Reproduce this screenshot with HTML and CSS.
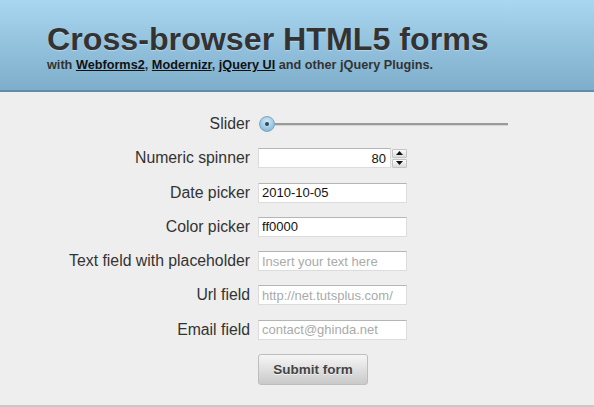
FILE: index.html
```html
<!DOCTYPE html>
<html>
<head>
<meta charset="utf-8">
<title>Cross-browser HTML5 forms</title>
<link rel="stylesheet" href="styles.css">
</head>
<body>
<div class="page">
  <header class="header">
    <h1 class="title">Cross-browser HTML5 forms</h1>
    <p class="subtitle">with <a href="#">Webforms2</a>, <a href="#">Modernizr</a>, <a href="#">jQuery UI</a> and other jQuery Plugins.</p>
  </header>
  <form class="form">
    <label class="label">Slider</label>
    <div class="field">
      <div class="slider"><span class="knob"><span class="dot"></span></span><span class="track"></span></div>
    </div>

    <label class="label">Numeric spinner</label>
    <div class="field spin">
      <input class="input num" type="text" value="80">
      <span class="spinbtns">
        <span class="sb up"><svg width="9" height="6" viewBox="0 0 9 6"><path d="M1 5 L4.5 1 L8 5 Z" fill="#111"/></svg></span>
        <span class="sb down"><svg width="9" height="6" viewBox="0 0 9 6"><path d="M1 1 L4.5 5 L8 1 Z" fill="#111"/></svg></span>
      </span>
    </div>

    <label class="label">Date picker</label>
    <div class="field"><input class="input" type="text" value="2010-10-05"></div>

    <label class="label">Color picker</label>
    <div class="field"><input class="input" type="text" value="ff0000"></div>

    <label class="label">Text field with placeholder</label>
    <div class="field"><input class="input" type="text" placeholder="Insert your text here"></div>

    <label class="label">Url field</label>
    <div class="field"><input class="input" type="text" placeholder="http://net.tutsplus.com/"></div>

    <label class="label">Email field</label>
    <div class="field"><input class="input" type="text" placeholder="contact@ghinda.net"></div>

    <span class="label"></span>
    <div class="field"><button class="submit" type="button">Submit form</button></div>
  </form>
</div>
</body>
</html>
```
FILE: styles.css
```css
html, body {
  margin: 0;
  padding: 0;
  background: #eeeeee;
}
body {
  font-family: "Liberation Sans", Arial, sans-serif;
  color: #333;
}
.page {
  height: 407px;
  box-sizing: border-box;
  border-bottom: 2px solid #c8c8c8;
  overflow: hidden;
}
.header {
  background: linear-gradient(#a9d6f0, #7eaecb);
  border-bottom: 2px solid #5f8eab;
  padding: 19px 0 0 47px;
  box-sizing: content-box;
  height: 71px;
}
.title {
  margin: 0;
  font-size: 32.2px;
  line-height: 40px;
  font-weight: bold;
  color: #333;
  text-shadow: 0 1px 1px rgba(255,255,255,0.35);
}
.subtitle {
  margin: -2px 0 0 0;
  font-size: 12.7px;
  line-height: 16px;
  font-weight: bold;
  color: #333;
}
.subtitle a {
  color: #111;
  text-decoration: underline;
}
.form {
  display: grid;
  grid-template-columns: 250px 1fr;
  column-gap: 8px;
  row-gap: 14.3px;
  padding-top: 22px;
  align-items: center;
}
.label {
  text-align: right;
  font-size: 15.8px;
  color: #333;
  line-height: 20px;
}
.field {
  display: flex;
  align-items: center;
  height: 20px;
}
.input {
  box-sizing: border-box;
  width: 149px;
  height: 20px;
  margin: 0;
  padding: 0 3px;
  border: 1px solid #dcdcdc;
  border-top-color: #b5b5b5;
  background: #fff;
  font-family: "Liberation Sans", Arial, sans-serif;
  font-size: 13px;
  color: #111;
  outline: none;
}
.input::placeholder {
  color: #aaa;
}
.num {
  width: 133px;
  text-align: right;
  padding-right: 4px;
}
.spinbtns {
  display: flex;
  flex-direction: column;
  margin-left: 1px;
  gap: 1px;
}
.sb {
  width: 13px;
  display: flex;
  align-items: center;
  justify-content: center;
  background: linear-gradient(#fbfbfb, #dcdcdc);
  border: 1px solid #c4c4c4;
  box-sizing: content-box;
  height: 7px;
  border-radius: 1px;
}
.slider {
  position: relative;
  width: 250px;
  height: 20px;
  display: flex;
  align-items: center;
}
.track {
  display: block;
  margin-left: 10px;
  width: 240px;
  height: 2px;
  background: #9a9a9a;
  border-bottom: 1px solid #d4d4d4;
}
.knob {
  position: absolute;
  left: 1px;
  top: 2px;
  width: 16px;
  height: 16px;
  border-radius: 50%;
  background: radial-gradient(circle at 50% 35%, #d6ebf7, #8fbfdc 70%, #6e9fbe);
  border: 1px solid #7da7c2;
  box-sizing: border-box;
  display: flex;
  align-items: center;
  justify-content: center;
  z-index: 1;
}
.dot {
  width: 4px;
  height: 4px;
  border-radius: 50%;
  background: #2c4a5e;
}
.submit {
  margin-top: 10px;
  width: 110px;
  height: 31px;
  border: 1px solid #bdbdbd;
  border-radius: 3px;
  background: linear-gradient(#f6f6f6, #c9c9c9);
  font-family: "Liberation Sans", Arial, sans-serif;
  font-weight: bold;
  font-size: 13.5px;
  color: #444;
  text-shadow: 0 1px 0 rgba(255,255,255,0.7);
  padding: 0;
}
```
